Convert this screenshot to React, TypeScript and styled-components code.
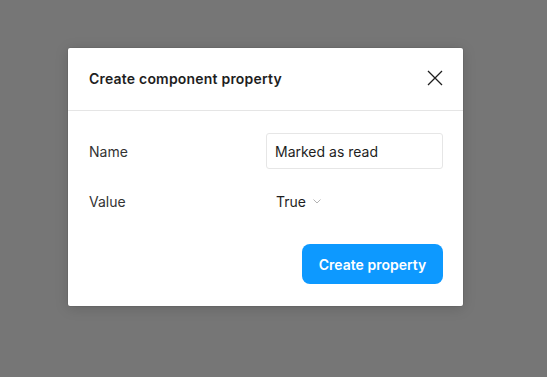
import React from "react";
import styled, { createGlobalStyle } from "styled-components";

const Global = createGlobalStyle`
  html, body { margin: 0; padding: 0; }
  body {
    width: 547px;
    height: 377px;
    background: #767676;
    font-family: Inter, "Noto Sans", sans-serif;
    overflow: hidden;
  }
`;

const Page = styled.div`
  width: 547px;
  height: 377px;
  display: flex;
  justify-content: flex-start;
  align-items: flex-start;
  padding: 48px 0 0 68px;
  box-sizing: border-box;
`;

const Dialog = styled.div`
  width: 395px;
  height: 258px;
  background: #ffffff;
  border-radius: 2px;
  box-shadow: 0 2px 14px rgba(0, 0, 0, 0.15), 0 0 0 0.5px rgba(0, 0, 0, 0.12);
  display: flex;
  flex-direction: column;
  box-sizing: border-box;
`;

const Header = styled.div`
  height: 63px;
  box-sizing: border-box;
  border-bottom: 1px solid #e5e5e5;
  display: flex;
  align-items: center;
  justify-content: space-between;
  padding: 0 20px 2px 21px;
`;

const Title = styled.h2`
  margin: 0;
  font-size: 14px;
  font-weight: 600;
  color: #1e1e1e;
  letter-spacing: 0.2px;
`;

const CloseButton = styled.button`
  border: 0;
  background: transparent;
  padding: 0;
  width: 16px;
  height: 16px;
  display: flex;
  align-items: center;
  justify-content: center;
  cursor: pointer;
  color: #1e1e1e;
`;

const Body = styled.div`
  flex: 1;
  display: flex;
  flex-direction: column;
  padding: 22px 20px 22px 21px;
`;

const Row = styled.div<{ $mt?: number }>`
  display: grid;
  grid-template-columns: 177px 177px;
  align-items: center;
  height: 36px;
  margin-top: ${(p) => p.$mt ?? 0}px;
`;

const Label = styled.span`
  font-size: 14px;
  color: #333333;
`;

const Input = styled.input`
  box-sizing: border-box;
  width: 177px;
  height: 36px;
  border: 1px solid #e6e6e6;
  border-radius: 3px;
  padding: 0 8px;
  font-family: inherit;
  font-size: 14px;
  color: #1e1e1e;
  outline: none;
`;

const Select = styled.div`
  display: flex;
  align-items: center;
  gap: 7px;
  padding-left: 10px;
  font-size: 14px;
  color: #1e1e1e;
`;

const Footer = styled.div`
  display: flex;
  justify-content: flex-end;
  margin-top: 25px;
`;

const PrimaryButton = styled.button`
  height: 40px;
  padding: 0 16px;
  width: 141px;
  border: 0;
  border-radius: 8px;
  background: #0d99ff;
  color: #ffffff;
  font-family: inherit;
  font-size: 14px;
  font-weight: 600;
  cursor: pointer;
`;

export default function App() {
  return (
    <>
      <Global />
      <Page>
        <Dialog>
          <Header>
            <Title>Create component property</Title>
            <CloseButton aria-label="Close">
              <svg width="16" height="16" viewBox="0 0 16 16" fill="none">
                <path d="M1 1L15 15M15 1L1 15" stroke="#1e1e1e" strokeWidth="1.3" />
              </svg>
            </CloseButton>
          </Header>
          <Body>
            <Row>
              <Label>Name</Label>
              <Input defaultValue="Marked as read" />
            </Row>
            <Row $mt={14}>
              <Label>Value</Label>
              <Select>
                True
                <svg width="8" height="5" viewBox="0 0 8 5" fill="none">
                  <path d="M0.5 0.5L4 4L7.5 0.5" stroke="#b3b3b3" strokeWidth="1" />
                </svg>
              </Select>
            </Row>
            <Footer>
              <PrimaryButton>Create property</PrimaryButton>
            </Footer>
          </Body>
        </Dialog>
      </Page>
    </>
  );
}
